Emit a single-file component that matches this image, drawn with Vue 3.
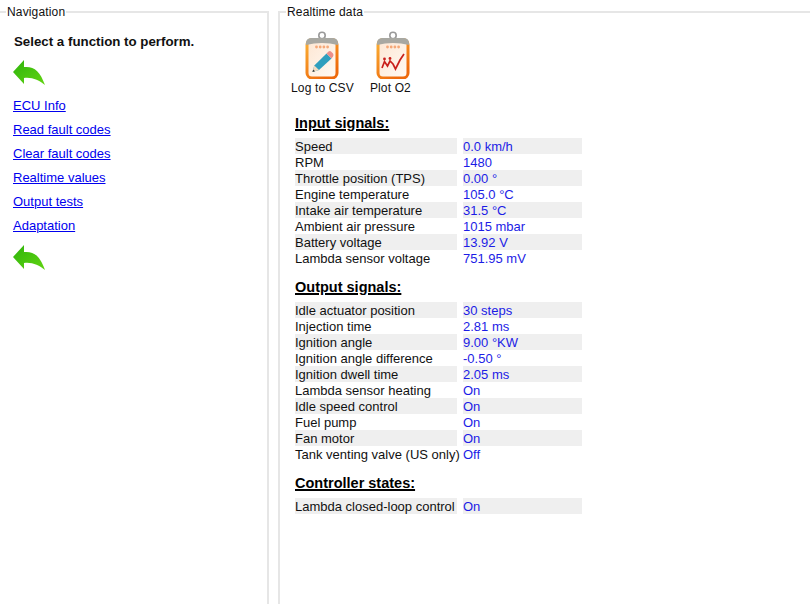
<script setup>
const links = ['ECU Info', 'Read fault codes', 'Clear fault codes', 'Realtime values', 'Output tests', 'Adaptation']
const sections = [
  { title: 'Input signals:', rows: [
    ['Speed', '0.0 km/h'], ['RPM', '1480'], ['Throttle position (TPS)', '0.00 °'],
    ['Engine temperature', '105.0 °C'], ['Intake air temperature', '31.5 °C'],
    ['Ambient air pressure', '1015 mbar'], ['Battery voltage', '13.92 V'],
    ['Lambda sensor voltage', '751.95 mV'] ] },
  { title: 'Output signals:', rows: [
    ['Idle actuator position', '30 steps'], ['Injection time', '2.81 ms'],
    ['Ignition angle', '9.00 °KW'], ['Ignition angle difference', '-0.50 °'],
    ['Ignition dwell time', '2.05 ms'], ['Lambda sensor heating', 'On'],
    ['Idle speed control', 'On'], ['Fuel pump', 'On'], ['Fan motor', 'On'],
    ['Tank venting valve (US only)', 'Off'] ] },
  { title: 'Controller states:', rows: [['Lambda closed-loop control', 'On']] },
]
const arrow = 'M1 13 L12 1 L12 8 C22 7 28 12 33 26 C27 21 20 18 12 19 L12 25 Z'
</script>

<template>
  <div class="screen">
    <fieldset class="panel nav">
      <legend>Navigation</legend>
      <p class="prompt">Select a function to perform.</p>
      <svg class="arrow first" width="34" height="27" viewBox="0 0 34 27">
        <defs>
          <linearGradient id="ag" x1="0" y1="0" x2="1" y2="1">
            <stop offset="0" stop-color="#2eb40c" />
            <stop offset="1" stop-color="#62d412" />
          </linearGradient>
        </defs>
        <path :d="arrow" fill="url(#ag)" />
      </svg>
      <ul class="links">
        <li v-for="l in links" :key="l"><a href="#" @click.prevent>{{ l }}</a></li>
      </ul>
      <svg class="arrow" width="34" height="27" viewBox="0 0 34 27">
        <path :d="arrow" fill="url(#ag)" />
      </svg>
    </fieldset>

    <fieldset class="panel data">
      <legend>Realtime data</legend>
      <div class="tools">
        <div class="tool">
          <svg width="48" height="48" viewBox="0 0 48 48">
            <defs>
              <linearGradient id="cb" x1="0" y1="0" x2="1" y2="1">
                <stop offset="0" stop-color="#fde6d2" />
                <stop offset="1" stop-color="#fffaf4" />
              </linearGradient>
              <linearGradient id="cr" x1="0" y1="0" x2="0.6" y2="1">
                <stop offset="0" stop-color="#fbb034" />
                <stop offset="1" stop-color="#ee6a0c" />
              </linearGradient>
            </defs>
            <circle cx="24" cy="4.5" r="3.2" fill="none" stroke="#9a9a9a" stroke-width="1.6" />
            <rect x="9" y="8.5" width="30" height="38.5" rx="5" fill="url(#cb)" stroke="url(#cr)" stroke-width="3" />
            <path d="M8 14 V12 Q8 7.5 13 7 H35 Q40 7.5 40 12 V14 Q24 10 8 14 Z" fill="#a8a8a2" />
            <g fill="#f5a878">
              <circle cx="18.5" cy="16" r="1.4" /><circle cx="22.2" cy="16" r="1.4" />
              <circle cx="25.9" cy="16" r="1.4" /><circle cx="29.6" cy="16" r="1.4" />
            </g>
            <path d="M14.5 41 L16.3 34.5 L28.5 22.5 L33.5 27.5 L21 39 Z" fill="#2f9fbe" />
            <path d="M16.3 34.5 L14.5 41 L21 39 Z" fill="#f3dcc0" />
            <path d="M14.5 41 L15.2 38.5 L17 40.2 Z" fill="#333" />
            <path d="M28.5 22.5 L30.5 20.5 Q32 19.5 33.5 21 L35 22.5 Q36 24 35 25.5 L33.5 27.5 Z" fill="#ec8f8a" />
          </svg>
          <span>Log to CSV</span>
        </div>
        <div class="tool second">
          <svg width="48" height="48" viewBox="0 0 48 48">
            <circle cx="24" cy="4.5" r="3.2" fill="none" stroke="#9a9a9a" stroke-width="1.6" />
            <rect x="9" y="8.5" width="30" height="38.5" rx="5" fill="url(#cb)" stroke="url(#cr)" stroke-width="3" />
            <path d="M8 14 V12 Q8 7.5 13 7 H35 Q40 7.5 40 12 V14 Q24 10 8 14 Z" fill="#a8a8a2" />
            <g fill="#f5a878">
              <circle cx="18.5" cy="16" r="1.4" /><circle cx="22.2" cy="16" r="1.4" />
              <circle cx="25.9" cy="16" r="1.4" /><circle cx="29.6" cy="16" r="1.4" />
            </g>
            <path d="M13 37 L15.5 30.5 L18.5 35 L21 30 L24 33 L26.5 38 L31 29 L35 23" fill="none" stroke="#c8201c" stroke-width="1.7" />
            <circle cx="15.5" cy="28" r="1.4" fill="#c8201c" />
            <circle cx="21" cy="27.5" r="1.4" fill="#c8201c" />
          </svg>
          <span>Plot O2</span>
        </div>
      </div>
      <section v-for="s in sections" :key="s.title" class="section">
        <h3>{{ s.title }}</h3>
        <div v-for="(r, i) in s.rows" :key="r[0]" class="row" :class="{ odd: i % 2 === 0 }">
          <span class="name">{{ r[0] }}</span>
          <span class="value">{{ r[1] }}</span>
        </div>
      </section>
    </fieldset>
  </div>
</template>

<style scoped>
.screen {
  width: 810px;
  height: 604px;
  overflow: hidden;
  display: grid;
  grid-template-columns: 269px 1fr;
  column-gap: 9px;
  font-family: "Liberation Sans", Arial, sans-serif;
  font-size: 13px;
  color: #111;
  background: #fff;
}
.panel {
  margin: 5px 0 0;
  padding: 0;
  height: 700px;
  min-width: 0;
  border: 2px solid #e6e6e6;
  box-sizing: border-box;
}
.panel legend {
  font-size: 12px;
  line-height: 14px;
  padding: 0 1px;
  color: #111;
  letter-spacing: 0.15px;
}
.nav {
  margin-left: -3px;
}
.nav legend {
  margin-left: 7px;
}
.data {
  margin-right: -4px;
}
.data legend {
  margin-left: 6px;
}
.prompt {
  margin: 15px 0 0 15px;
  font-size: 13.3px;
  font-weight: bold;
  line-height: 16px;
}
.arrow {
  display: block;
  margin: 0 0 0 13px;
}
.arrow.first {
  margin-top: 9px;
}
.links {
  list-style: none;
  margin: 8px 0 6px 14px;
  padding: 0;
}
.links li {
  height: 24px;
  line-height: 24px;
}
.links a {
  color: #0000ee;
}
.tools {
  display: flex;
  gap: 16px;
  margin: 12px 0 0 11px;
}
.tool {
  display: flex;
  flex-direction: column;
  align-items: center;
  font-size: 12px;
  letter-spacing: 0.15px;
  line-height: 14px;
  color: #111;
}
.tool svg {
  display: block;
  margin: 0 -4px 2px;
}
.tool.second svg {
  margin: 0 -7px 2px -1px;
}
.section {
  margin-left: 15px;
  margin-top: 12px;
}
.section:first-of-type {
  margin-top: 19px;
}
h3 {
  margin: 0 0 5px;
  font-size: 14.5px;
  line-height: 19px;
  text-decoration: underline;
  text-decoration-thickness: 2px;
  color: #000;
}
.row {
  display: grid;
  grid-template-columns: 162px 119px;
  column-gap: 6px;
  height: 16px;
  line-height: 18px;
  white-space: nowrap;
}
.name,
.value {
  height: 16px;
}
.odd .name,
.odd .value {
  background: #efefef;
}
.value {
  color: #1c1ce6;
}
</style>
